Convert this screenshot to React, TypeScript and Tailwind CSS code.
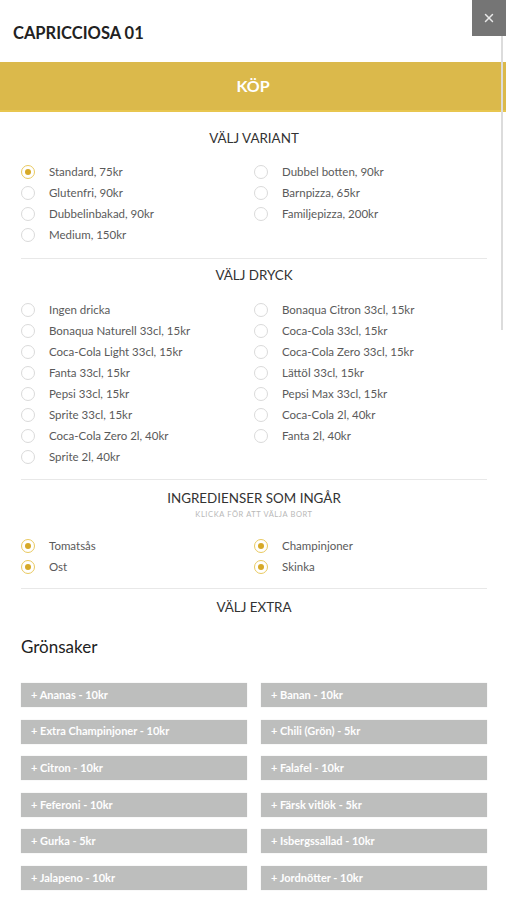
import { X } from "lucide-react";

// pizza order modal: variant, drink, ingredients, extras
const variants = [
  ["Standard, 75kr", "Dubbel botten, 90kr"],
  ["Glutenfri, 90kr", "Barnpizza, 65kr"],
  ["Dubbelinbakad, 90kr", "Familjepizza, 200kr"],
  ["Medium, 150kr", ""],
];

const drinks = [
  ["Ingen dricka", "Bonaqua Citron 33cl, 15kr"],
  ["Bonaqua Naturell 33cl, 15kr", "Coca-Cola 33cl, 15kr"],
  ["Coca-Cola Light 33cl, 15kr", "Coca-Cola Zero 33cl, 15kr"],
  ["Fanta 33cl, 15kr", "Lättöl 33cl, 15kr"],
  ["Pepsi 33cl, 15kr", "Pepsi Max 33cl, 15kr"],
  ["Sprite 33cl, 15kr", "Coca-Cola 2l, 40kr"],
  ["Coca-Cola Zero 2l, 40kr", "Fanta 2l, 40kr"],
  ["Sprite 2l, 40kr", ""],
];

const ingredients = [
  ["Tomatsås", "Champinjoner"],
  ["Ost", "Skinka"],
];

const extras = [
  "+ Ananas - 10kr",
  "+ Banan - 10kr",
  "+ Extra Champinjoner - 10kr",
  "+ Chili (Grön) - 5kr",
  "+ Citron - 10kr",
  "+ Falafel - 10kr",
  "+ Feferoni - 10kr",
  "+ Färsk vitlök - 5kr",
  "+ Gurka - 5kr",
  "+ Isbergssallad - 10kr",
  "+ Jalapeno - 10kr",
  "+ Jordnötter - 10kr",
];

function Radio({ label, checked }: { label: string; checked?: boolean }) {
  if (!label) return <div />;
  return (
    <div className="flex items-center h-[21px]">
      {checked ? (
        <span className="w-[14px] h-[14px] rounded-full border-[1.5px] border-[#e9c95f] flex items-center justify-center shrink-0">
          <span className="w-[6px] h-[6px] rounded-full bg-[#d6a928]" />
        </span>
      ) : (
        <span className="w-[14px] h-[14px] rounded-full border border-[#dadada] shrink-0" />
      )}
      <span className="ml-[14px] text-[11.5px] text-[#5a5a5a]">{label}</span>
    </div>
  );
}

function Heading({ children }: { children: string }) {
  return (
    <h2 className="text-center text-[13.4px] leading-[20px] text-[#333] uppercase">
      {children}
    </h2>
  );
}

export default function App() {
  return (
    <div
      className="relative w-[506px] min-h-[900px] bg-white overflow-hidden"
      style={{ fontFamily: "Lato, 'Noto Sans', sans-serif" }}
    >
      <div className="h-[62px] flex items-center pl-[13px] pt-[4px]">
        <h1 className="text-[16.5px] font-bold text-[#222]">CAPRICCIOSA 01</h1>
      </div>

      <button className="w-full h-[50px] bg-[#dbb94b] border-b-2 border-[#e8c64f] text-white font-bold text-[16px]">
        KÖP
      </button>

      <div className="pl-[21px] pr-[19px]">
        <section className="pt-[16px] pb-[13px] border-b border-[#e8e8e8]">
          <Heading>Välj variant</Heading>
          <div className="grid grid-cols-2 mt-[13px]">
            {variants.flatMap((row, i) =>
              row.map((v, j) => (
                <Radio key={`${i}-${j}`} label={v} checked={i === 0 && j === 0} />
              ))
            )}
          </div>
        </section>

        <section className="pt-[6px] pb-[12px] border-b border-[#e8e8e8]">
          <Heading>Välj dryck</Heading>
          <div className="grid grid-cols-2 mt-[14px]">
            {drinks.flatMap((row, i) =>
              row.map((v, j) => <Radio key={`${i}-${j}`} label={v} />)
            )}
          </div>
        </section>

        <section className="pt-[8px] pb-[11px] border-b border-[#e8e8e8]">
          <Heading>Ingredienser som ingår</Heading>
          <p className="text-center text-[7.5px] leading-[10px] mt-[2px] text-[#b8b8b8] uppercase tracking-[0.6px]">
            Klicka för att välja bort
          </p>
          <div className="grid grid-cols-2 mt-[15px]">
            {ingredients.flatMap((row, i) =>
              row.map((v, j) => <Radio key={`${i}-${j}`} label={v} checked />)
            )}
          </div>
        </section>

        <section className="pt-[8px]">
          <Heading>Välj extra</Heading>
          <h3 className="mt-[18px] text-[17px] leading-[24px] text-[#222]">Grönsaker</h3>
          <div className="grid grid-cols-2 gap-x-[14px] gap-y-[12.6px] mt-[24px]">
            {extras.map((e) => (
              <button
                key={e}
                className="h-[24px] bg-[#bdbebd] text-left pl-[10px] text-white font-bold text-[11px] shadow-[0_0_1px_rgba(0,0,0,0.15)]"
              >
                {e}
              </button>
            ))}
          </div>
        </section>
      </div>

      <div className="absolute top-0 right-[3px] w-[2px] h-[330px] bg-[#dcdcdc]" />
      <button className="absolute top-0 right-0 w-[34px] h-[36px] bg-[#757575] flex items-center justify-center">
        <X size={14} strokeWidth={2.5} color="#e8e8e8" />
      </button>
    </div>
  );
}
